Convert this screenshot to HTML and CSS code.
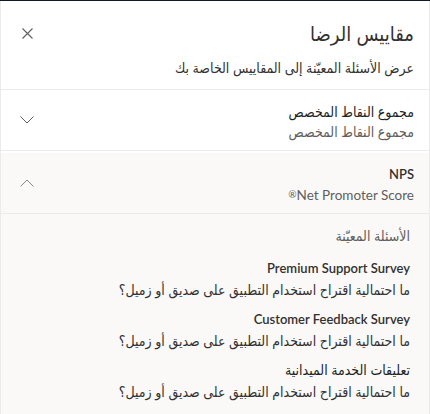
FILE: index.html
```html
<!DOCTYPE html>
<html lang="ar" dir="rtl">
<head>
<meta charset="utf-8">
<link rel="stylesheet" href="styles.css">
</head>
<body>
<div class="topbar"></div>
<div class="panel">
  <header class="header">
    <div class="title-row">
      <h1 class="title">مقاييس الرضا</h1>
      <button class="close" aria-label="close">
        <svg width="11" height="11" viewBox="0 0 11 11"><path d="M0.5 0.5 L10.5 10.5 M10.5 0.5 L0.5 10.5" stroke="#605e5c" stroke-width="1.1" fill="none"/></svg>
      </button>
    </div>
    <p class="subtitle">عرض الأسئلة المعيّنة إلى المقاييس الخاصة بك</p>
  </header>

  <section class="acc">
    <div class="acc-head">
      <div class="acc-text">
        <div class="acc-title ar">مجموع النقاط المخصص</div>
        <div class="acc-sub">مجموع النقاط المخصص</div>
      </div>
      <svg class="chev" width="14" height="8" viewBox="0 0 14 8"><path d="M0.5 0.5 L7 7 L13.5 0.5" stroke="#605e5c" stroke-width="1" fill="none"/></svg>
    </div>
  </section>

  <section class="acc open">
    <div class="acc-head">
      <div class="acc-text">
        <div class="acc-title en">NPS</div>
        <div class="acc-sub en">Net Promoter Score<span class="reg">&reg;</span></div>
      </div>
      <svg class="chev" width="14" height="8" viewBox="0 0 14 8"><path d="M0.5 7.5 L7 1 L13.5 7.5" stroke="#8a8886" stroke-width="1" fill="none"/></svg>
    </div>
    <div class="acc-body">
      <div class="body-label">الأسئلة المعيّنة</div>
      <div class="q">
        <div class="q-name en">Premium Support Survey</div>
        <div class="q-text">ما احتمالية اقتراح استخدام التطبيق على صديق أو زميل؟</div>
      </div>
      <div class="q">
        <div class="q-name en">Customer Feedback Survey</div>
        <div class="q-text">ما احتمالية اقتراح استخدام التطبيق على صديق أو زميل؟</div>
      </div>
      <div class="q">
        <div class="q-name ar">تعليقات الخدمة الميدانية</div>
        <div class="q-text">ما احتمالية اقتراح استخدام التطبيق على صديق أو زميل؟</div>
      </div>
    </div>
  </section>
</div>
</body>
</html>
```
FILE: styles.css
```css
* { box-sizing: border-box; }
html, body { margin: 0; padding: 0; }
body {
  width: 430px;
  height: 414px;
  overflow: hidden;
  background: #ffffff;
  font-family: "Lato", "DejaVu Sans Condensed", "DejaVu Sans", sans-serif;
  color: #323130;
}
.topbar { height: 1px; background: #0f1b2d; }
.panel {
  border-left: 1px solid #edebe9;
  border-right: 1px solid #edebe9;
  height: 413px;
}
.header {
  padding: 5px 15px 0 15px;
  border-bottom: 1px solid #edebe9;
  height: 89px;
}
.title-row {
  display: flex;
  align-items: center;
  justify-content: space-between;
  height: 54px;
}
.title {
  margin: 0;
  font-size: 20px;
  font-weight: 400;
  color: #323130;
}
.close {
  border: 0;
  background: none;
  padding: 0;
  margin-left: 6px;
  display: flex;
}
.subtitle {
  margin: 0;
  font-size: 14px;
  line-height: 16px;
}
.acc { border-bottom: 1px solid #edebe9; }
.acc-head {
  display: flex;
  align-items: center;
  justify-content: space-between;
  height: 60px;
  padding: 0 15px 0 19px;
}
.acc-text { padding-top: 3px; }
.acc.open .acc-head {
  background: #faf9f8;
  border-top: 2px solid #ffffff;
  border-bottom: 1px solid #edebe9;
  height: 63px;
}
.acc-title { font-size: 14px; font-weight: 600; line-height: 20px; color: #323130; }
.acc-title.ar, .q-name.ar { font-weight: 400; color: #201f1e; }
.acc-sub { font-size: 14px; color: #605e5c; line-height: 20px; margin-top: 0px; }
.en { font-size: 13.5px; }
.acc-title.en { font-size: 13px; }
.reg { font-size: 10px; vertical-align: 2px; margin-left: 1px; }
.acc-body {
  background: #faf9f8;
  padding: 12px 19px 10px 19px;
  height: 200px;
}
.body-label { font-size: 14px; color: #605e5c; line-height: 20px; margin-bottom: 12px; }
.q { margin-bottom: 9px; }
.q-name { font-size: 14px; font-weight: 600; line-height: 20px; color: #323130; }
.q-name.en { font-size: 13px; }
.q-text { font-size: 14px; line-height: 20px; margin-top: 2px; color: #323130; }
```
